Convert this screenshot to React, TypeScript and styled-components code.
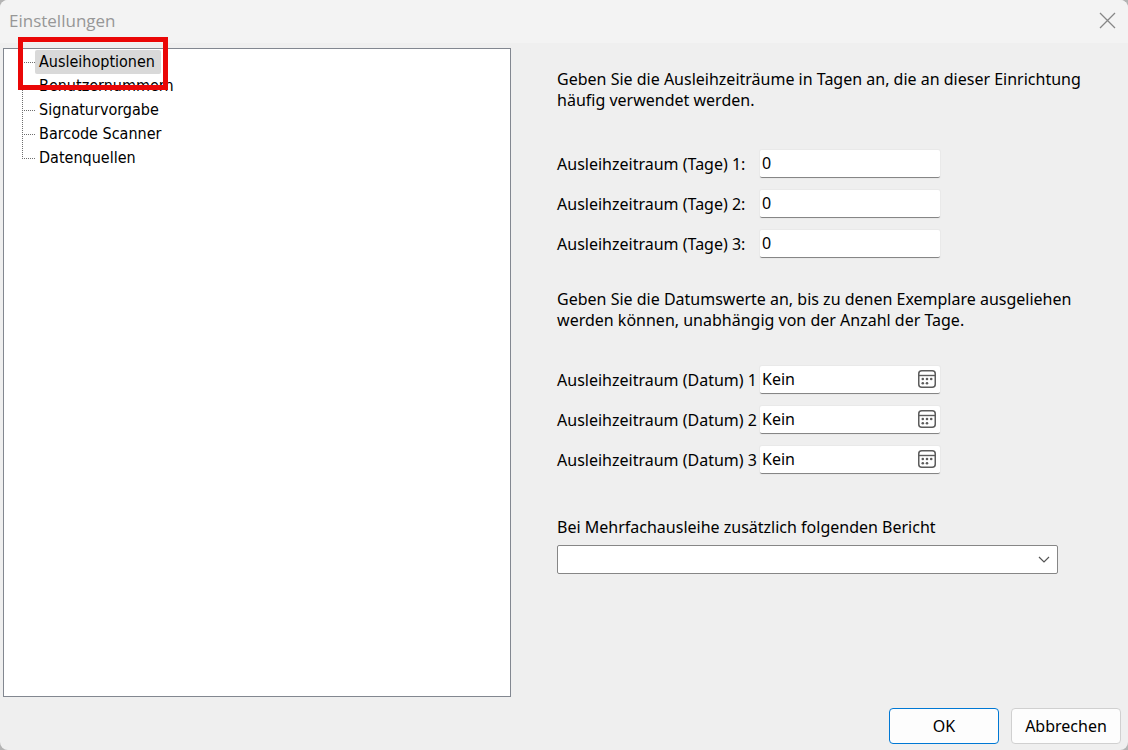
import React, { useState } from "react";
import styled, { createGlobalStyle } from "styled-components";

const GlobalStyle = createGlobalStyle`
  * { box-sizing: border-box; }
  body {
    margin: 0;
    background: #b4b4b4;
    color: #000;
    font-family: "Noto Sans", Tahoma, sans-serif;
    font-size: 16px;
    line-height: 21px;
  }
  button, input, select { font: inherit; color: inherit; }
`;

const Dialog = styled.main`
  display: flex;
  flex-direction: column;
  min-height: 100vh;
  overflow: hidden;
  background: #efefef;
  border-radius: 8px;
`;

const TitleBar = styled.header`
  display: flex;
  align-items: center;
  justify-content: space-between;
  height: 43px;
  padding: 0 12px 2px 9px;
  background: #f3f3f3;
`;

const Title = styled.h1`
  margin: 0;
  color: #979797;
  font-family: "Open Sans", "Noto Sans", sans-serif;
  font-size: 17px;
  font-weight: 400;
`;

const CloseButton = styled.button`
  display: flex;
  padding: 0;
  border: 0;
  background: none;
  color: #868686;
`;

const Content = styled.div`
  display: grid;
  grid-template-columns: minmax(0, 14fr) minmax(0, 17fr);
  flex: 1;
  padding: 5px 0 0 3px;
`;

const TreePanel = styled.nav`
  position: relative;
  min-height: 240px;
  background: #fff;
  border: 1px solid #828790;
  font-family: "DejaVu Sans Condensed", Tahoma, sans-serif;
`;

const TreeList = styled.ul`
  margin: 0;
  padding: 1px 0 0 18px;
  list-style: none;
`;

const TreeRow = styled.li`
  display: flex;
  align-items: center;
  height: 24px;
`;

const Branch = styled.svg`
  flex: none;
  width: 13px;
  height: 24px;
`;

const TreeItem = styled.button<{ $selected: boolean }>`
  height: 24px;
  padding: 0 6px 2px 4px;
  border: 0;
  border-radius: 2px;
  background: ${(p) => (p.$selected ? "#d9d9d9" : "transparent")};
  white-space: nowrap;
`;

const Highlight = styled.div`
  position: absolute;
  top: -12px;
  left: 14px;
  width: 150px;
  height: 53px;
  border: 5px solid #ea0707;
  pointer-events: none;
`;

const Form = styled.form`
  padding: 21px 40px 0 46px;
`;

const Group = styled.section<{ $gap: number }>`
  display: flex;
  flex-direction: column;
  gap: ${(p) => p.$gap}px;
  margin-bottom: 31px;
`;

const Hint = styled.p`
  max-width: 530px;
  margin: 0;
`;

const Fields = styled.div`
  display: grid;
  gap: 12px;
`;

const Field = styled.div`
  display: grid;
  grid-template-columns: 203px 180px;
  align-items: center;
  height: 28px;
`;

const Label = styled.label`
  white-space: nowrap;
`;

const InputBox = styled.div`
  display: flex;
  align-items: center;
  height: 28px;
  background: #fff;
  border-bottom: 1px solid #868686;
  border-radius: 2px;
  box-shadow: 0 0 0 1px #e9e9e9;
`;

const TextInput = styled.input`
  flex: 1;
  min-width: 0;
  padding: 0 2px;
  border: 0;
  outline: 0;
  background: none;
`;

const CalendarButton = styled.button`
  display: flex;
  padding: 0 3px 1px;
  border: 0;
  background: none;
  color: #5c5c5c;
`;

const Report = styled.div`
  display: grid;
  gap: 7px;
  max-width: 501px;
  padding-top: 12px;
`;

const SelectBox = styled.div`
  display: grid;
  align-items: center;
  background: #fff;
  border: 1px solid #868686;
  border-radius: 2px;

  > * { grid-area: 1 / 1; }
`;

const Select = styled.select`
  appearance: none;
  width: 100%;
  height: 27px;
  padding: 0 32px 0 4px;
  border: 0;
  outline: 0;
  background: none;
`;

const Chevron = styled.svg`
  justify-self: end;
  margin-right: 7px;
  pointer-events: none;
`;

const Footer = styled.footer`
  display: flex;
  justify-content: flex-end;
  gap: 12px;
  padding: 11px 7px 6px;
`;

const ActionButton = styled.button<{ $primary?: boolean }>`
  width: 110px;
  height: 36px;
  padding: 0;
  background: #fdfdfd;
  border: 1px solid ${(p) => (p.$primary ? "#0078d4" : "#d0d0d0")};
  border-radius: 4px;
`;

const sections = [
  "Ausleihoptionen",
  "Benutzernummern",
  "Signaturvorgabe",
  "Barcode Scanner",
  "Datenquellen",
];

function CalendarIcon() {
  return (
    <svg width="20" height="20" viewBox="0 0 20 20" fill="none" stroke="currentColor" aria-hidden="true">
      <rect x="1.75" y="1.75" width="16.5" height="16.5" rx="3" strokeWidth="1.5" />
      <path d="M2 6.5H18" strokeWidth="1.4" />
      <g fill="currentColor" stroke="none">
        <circle cx="5.8" cy="10" r="1.3" />
        <circle cx="10" cy="10" r="1.3" />
        <circle cx="14.2" cy="10" r="1.3" />
        <circle cx="5.8" cy="14.2" r="1.3" />
        <circle cx="10" cy="14.2" r="1.3" />
      </g>
    </svg>
  );
}

export default function App() {
  const [selected, setSelected] = useState(0);

  return (
    <>
      <GlobalStyle />
      <Dialog>
        <TitleBar>
          <Title>Einstellungen</Title>
          <CloseButton type="button" aria-label="Schließen">
            <svg width="17" height="17" viewBox="0 0 17 17" stroke="currentColor" strokeWidth="1.3" aria-hidden="true">
              <path d="M1 1 16 16M16 1 1 16" />
            </svg>
          </CloseButton>
        </TitleBar>

        <Content>
          <TreePanel aria-label="Einstellungen">
            <TreeList>
              {sections.map((name, i) => (
                <TreeRow key={name}>
                  <Branch viewBox="0 0 13 24" stroke="#6e6e6e" strokeDasharray="1 1" aria-hidden="true">
                    <path d="M0 12.5H13" />
                    {i > 0 && <path d="M0.5 0V12" />}
                    {i < sections.length - 1 && <path d="M0.5 12V24" />}
                  </Branch>
                  <TreeItem type="button" $selected={i === selected} onClick={() => setSelected(i)}>
                    {name}
                  </TreeItem>
                </TreeRow>
              ))}
            </TreeList>
            <Highlight />
          </TreePanel>

          <Form id="loan-options" onSubmit={(e) => e.preventDefault()}>
            <Group $gap={39}>
              <Hint>
                Geben Sie die Ausleihzeiträume in Tagen an, die an dieser Einrichtung häufig verwendet werden.
              </Hint>
              <Fields>
                {[1, 2, 3].map((n) => (
                  <Field key={n}>
                    <Label htmlFor={`days-${n}`}>Ausleihzeitraum (Tage) {n}:</Label>
                    <InputBox>
                      <TextInput id={`days-${n}`} defaultValue="0" />
                    </InputBox>
                  </Field>
                ))}
              </Fields>
            </Group>

            <Group $gap={35}>
              <Hint>
                Geben Sie die Datumswerte an, bis zu denen Exemplare ausgeliehen werden können, unabhängig von der Anzahl der Tage.
              </Hint>
              <Fields>
                {[1, 2, 3].map((n) => (
                  <Field key={n}>
                    <Label htmlFor={`date-${n}`}>Ausleihzeitraum (Datum) {n}</Label>
                    <InputBox>
                      <TextInput id={`date-${n}`} defaultValue="Kein" />
                      <CalendarButton type="button" aria-label="Kalender öffnen">
                        <CalendarIcon />
                      </CalendarButton>
                    </InputBox>
                  </Field>
                ))}
              </Fields>
            </Group>

            <Report>
              <Label htmlFor="report">Bei Mehrfachausleihe zusätzlich folgenden Bericht</Label>
              <SelectBox>
                <Select id="report" defaultValue="">
                  <option value=""></option>
                </Select>
                <Chevron width="12" height="7" viewBox="0 0 12 7" fill="none" stroke="#555" strokeWidth="1.2" aria-hidden="true">
                  <path d="M1 1 6 6 11 1" />
                </Chevron>
              </SelectBox>
            </Report>
          </Form>
        </Content>

        <Footer>
          <ActionButton type="submit" form="loan-options" $primary>OK</ActionButton>
          <ActionButton type="button">Abbrechen</ActionButton>
        </Footer>
      </Dialog>
    </>
  );
}
